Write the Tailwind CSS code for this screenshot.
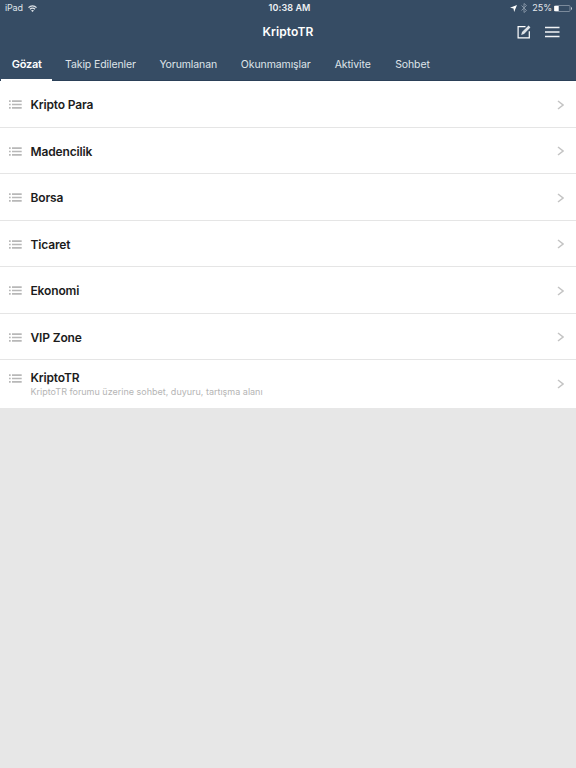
<!DOCTYPE html>
<html lang="tr">
<head>
  <meta charset="UTF-8">
  <meta name="viewport" content="width=device-width, initial-scale=1.0">
  <title>KriptoTR</title>
  <script src="https://cdn.jsdelivr.net/npm/@tailwindcss/browser@4"></script>
</head>
<body class="bg-[#e7e7e7] font-['Inter',sans-serif] h-screen overflow-hidden">
  <header class="h-[81px] bg-[#364c64] text-white border-b border-[#2b4058] flex flex-col">
    <!-- Status bar -->
    <div class="h-4 shrink-0 grid grid-cols-3 items-center pl-[5px] pr-1 text-[9px] leading-4">
      <div class="flex items-center gap-[5px] text-[#dfe4e9]">
        <span class="tracking-[-0.2px]">iPad</span>
        <svg class="w-[9px] h-[7px]" viewBox="0 0 18 14" fill="none" stroke="currentColor" stroke-width="2.6">
          <path d="M1 5.2C5.5.6 12.5.6 17 5.2M4 8.6c2.8-2.9 7.2-2.9 10 0"/>
          <path d="M9 14 6 11c1.7-1.6 4.3-1.6 6 0Z" fill="currentColor" stroke="none"/>
        </svg>
      </div>
      <div class="text-center font-semibold text-[#eef1f4] tracking-[0.1px] pl-0.5">10:38 AM</div>
      <div class="flex items-center justify-end">
        <svg class="w-[7px] h-[7px] mr-1" viewBox="0 0 14 14" fill="#fff"><path d="M14 0 8.3 14 7 7 0 5.7Z"/></svg>
        <svg class="w-[6px] h-[10px] mr-[5px]" viewBox="0 0 12 20" fill="none" stroke="#8292a3" stroke-width="2"><path d="m1 5 10 10-5 4V1l5 4L1 15"/></svg>
        <span class="text-[#e4e8ec] mr-0.5">25%</span>
        <svg class="w-[18px] h-[7px]" viewBox="0 0 18 7">
          <rect x=".5" y=".5" width="15.5" height="6" rx="1" fill="none" stroke="#8d9baa" stroke-width=".8"/>
          <rect x=".2" y="1" width="4.5" height="5" fill="#fff"/>
          <path d="M17 2c1.3.4 1.3 2.6 0 3Z" fill="#c5cdd5"/>
        </svg>
      </div>
    </div>
    <!-- Title bar -->
    <div class="h-8 shrink-0 grid grid-cols-3 items-center pr-4">
      <h1 class="col-start-2 pl-4 text-center text-[12px] leading-4 font-semibold tracking-[0.1px]">KriptoTR</h1>
      <div class="flex items-center justify-end gap-3">
        <svg class="w-4 h-[14px]" viewBox="0 0 16 14" fill="none" stroke="#fff" stroke-width="1.2">
          <path d="M9.5 1.7H2.1v11.2h11.2V6.2"/>
          <path d="m5.2 10 .8-2.9L12.6.6l1.8 1.8L8 9.1Z" fill="#dde2e7" stroke="none"/>
        </svg>
        <svg class="w-4 h-3" viewBox="0 0 16 12" stroke="#f2f4f6" stroke-width="1.5"><path d="M1 1.5h14.5M1 6h14.5M1 10.5h14.5"/></svg>
      </div>
    </div>
    <!-- Tabs -->
    <nav class="h-[33px] shrink-0 flex text-[10.5px] tracking-[-0.1px] leading-[33px] text-center whitespace-nowrap text-[#dfe4e9]">
      <a class="w-[53.5px] px-px text-[11px] leading-8 text-white font-semibold tracking-[-0.25px] flex flex-col">
        <span class="h-[31px]">Gözat</span>
        <span class="h-0.5 bg-white mr-px"></span>
      </a>
      <a class="w-[94px]">Takip Edilenler</a>
      <a class="w-[81.5px]">Yorumlanan</a>
      <a class="w-[93.5px]">Okunmamışlar</a>
      <a class="w-[60.5px]">Aktivite</a>
      <a class="w-[59px]">Sohbet</a>
    </nav>
  </header>

  <main id="forums" class="bg-white"></main>

  <script>
    const forums = [
      { name: 'Kripto Para' },
      { name: 'Madencilik' },
      { name: 'Borsa' },
      { name: 'Ticaret' },
      { name: 'Ekonomi' },
      { name: 'VIP Zone' },
      { name: 'KriptoTR', info: 'KriptoTR forumu üzerine sohbet, duyuru, tartışma alanı' },
    ];

    // Render forum rows
    document.getElementById('forums').innerHTML = forums.map(f => `
      <div class="${f.info ? 'h-12' : 'h-[46.5px] pt-[1.5px] border-b border-[#e5e5e5]'} flex items-center pl-[9px] pr-3">
        <svg class="w-[13px] h-[9px] mr-[8.5px] shrink-0 ${f.info ? 'mb-3' : ''}" viewBox="0 0 13 9" stroke="#b8b8b8" stroke-width="1.7">
          <path d="M0 1.2h1.7M0 4.5h1.7M0 7.8h1.7M3 1.2h9.7M3 4.5h9.7M3 7.8h9.7"/>
        </svg>
        <div class="flex-1">
          <div class="text-[12px] leading-[15px] tracking-[-0.15px] font-semibold text-[#1c1c1c]">${f.name}</div>
          ${f.info ? `<div class="text-[9px] leading-[13px] text-[#b5b5b5]">${f.info}</div>` : ''}
        </div>
        <svg class="w-[7px] h-[10px]" viewBox="0 0 7 10" fill="none" stroke="#c4c4c4" stroke-width="1.5"><path d="m1 1 5 4-5 4"/></svg>
      </div>`).join('');
  </script>
</body>
</html>
